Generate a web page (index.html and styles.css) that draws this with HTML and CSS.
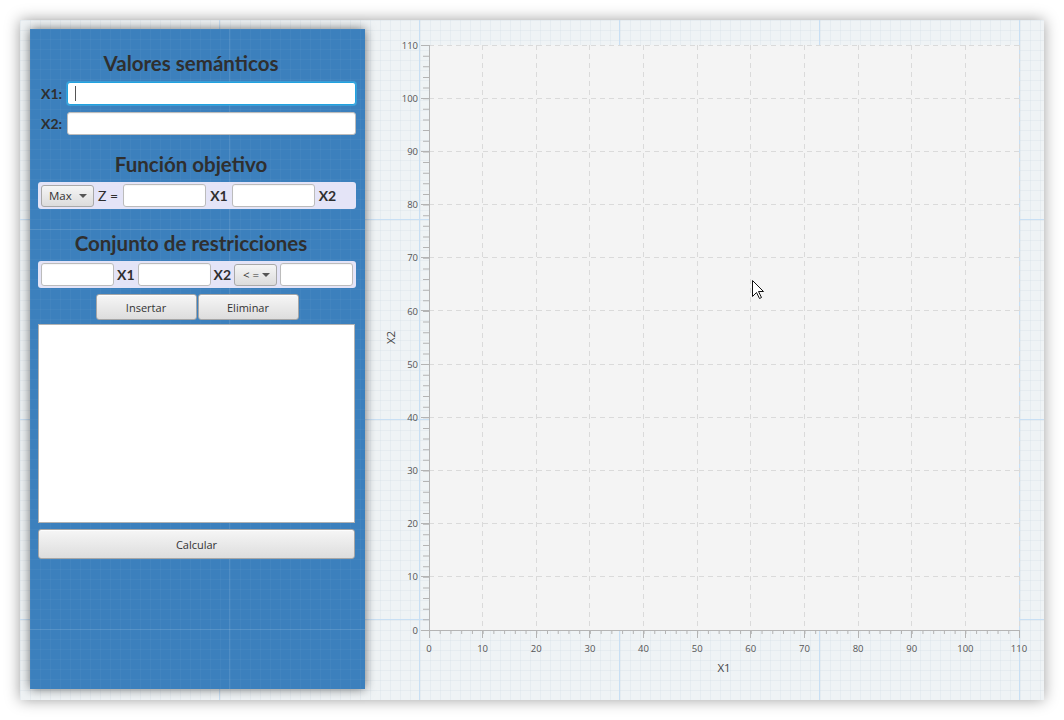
FILE: index.html
```html
<!DOCTYPE html>
<html lang="es">
<head>
<meta charset="utf-8">
<title>Programación lineal</title>
<link rel="stylesheet" href="styles.css">
</head>
<body>
<div class="window">
  <aside class="panel">
    <h2 class="title t1">Valores semánticos</h2>
    <div class="field-row">
      <label class="lbl lbl-row">X1:</label>
      <span class="input-wrap focused"><input class="tf tf-wide" type="text"></span>
    </div>
    <div class="field-row">
      <label class="lbl lbl-row">X2:</label>
      <span class="input-wrap"><input class="tf tf-wide" type="text"></span>
    </div>

    <h2 class="title t2">Función objetivo</h2>
    <div class="box box-obj">
      <div class="combo combo-max"><span class="combo-text">Max</span><i class="arrow"></i></div>
      <span class="txt">Z =</span>
      <input class="tf tf-83" type="text">
      <span class="lbl">X1</span>
      <input class="tf tf-83" type="text">
      <span class="lbl">X2</span>
    </div>

    <h2 class="title t3">Conjunto de restricciones</h2>
    <div class="box box-res">
      <input class="tf tf-73" type="text">
      <span class="lbl">X1</span>
      <input class="tf tf-73" type="text">
      <span class="lbl">X2</span>
      <div class="combo combo-op"><span class="combo-text">&lt; =</span><i class="arrow"></i></div>
      <input class="tf tf-73" type="text">
    </div>

    <div class="btn-row">
      <button class="btn btn-half" type="button">Insertar</button>
      <button class="btn btn-half" type="button">Eliminar</button>
    </div>
    <div class="list"></div>
    <button class="btn btn-full" type="button">Calcular</button>
  </aside>

  <svg class="chart" width="679" height="680" viewBox="365 20 679 680" xmlns="http://www.w3.org/2000/svg">
    <rect x="429" y="45" width="590" height="585" fill="#f4f4f4"/>
    <g class="grid" stroke="#dadada" stroke-width="1" stroke-dasharray="5 4" fill="none">
      <line x1="482.5" y1="45" x2="482.5" y2="630"/>
      <line x1="536.5" y1="45" x2="536.5" y2="630"/>
      <line x1="589.5" y1="45" x2="589.5" y2="630"/>
      <line x1="643.5" y1="45" x2="643.5" y2="630"/>
      <line x1="697.5" y1="45" x2="697.5" y2="630"/>
      <line x1="750.5" y1="45" x2="750.5" y2="630"/>
      <line x1="804.5" y1="45" x2="804.5" y2="630"/>
      <line x1="858.5" y1="45" x2="858.5" y2="630"/>
      <line x1="911.5" y1="45" x2="911.5" y2="630"/>
      <line x1="965.5" y1="45" x2="965.5" y2="630"/>
      <line x1="1019.5" y1="45" x2="1019.5" y2="630"/>
      <line x1="429" y1="576.5" x2="1020" y2="576.5"/>
      <line x1="429" y1="523.5" x2="1020" y2="523.5"/>
      <line x1="429" y1="470.5" x2="1020" y2="470.5"/>
      <line x1="429" y1="417.5" x2="1020" y2="417.5"/>
      <line x1="429" y1="364.5" x2="1020" y2="364.5"/>
      <line x1="429" y1="310.5" x2="1020" y2="310.5"/>
      <line x1="429" y1="257.5" x2="1020" y2="257.5"/>
      <line x1="429" y1="204.5" x2="1020" y2="204.5"/>
      <line x1="429" y1="151.5" x2="1020" y2="151.5"/>
      <line x1="429" y1="98.5" x2="1020" y2="98.5"/>
      <line x1="429" y1="45.5" x2="1020" y2="45.5"/>
    </g>
    <g class="axes" stroke="#b4b4b4" fill="none">
      <line x1="429.5" y1="45" x2="429.5" y2="631"/>
      <line x1="429" y1="630.5" x2="1020" y2="630.5"/>
      <line x1="426" y1="631" x2="426" y2="45" stroke-width="6" stroke-dasharray="1 9.636"/>
      <line x1="429" y1="632" x2="1020" y2="632" stroke-width="4" stroke-dasharray="1 9.727"/>
      <line x1="421" y1="630.5" x2="429" y2="630.5"/>
      <line x1="421" y1="576.5" x2="429" y2="576.5"/>
      <line x1="421" y1="523.5" x2="429" y2="523.5"/>
      <line x1="421" y1="470.5" x2="429" y2="470.5"/>
      <line x1="421" y1="417.5" x2="429" y2="417.5"/>
      <line x1="421" y1="364.5" x2="429" y2="364.5"/>
      <line x1="421" y1="310.5" x2="429" y2="310.5"/>
      <line x1="421" y1="257.5" x2="429" y2="257.5"/>
      <line x1="421" y1="204.5" x2="429" y2="204.5"/>
      <line x1="421" y1="151.5" x2="429" y2="151.5"/>
      <line x1="421" y1="98.5" x2="429" y2="98.5"/>
      <line x1="421" y1="45.5" x2="429" y2="45.5"/>
      <line x1="429.5" y1="630" x2="429.5" y2="638"/>
      <line x1="482.5" y1="630" x2="482.5" y2="638"/>
      <line x1="536.5" y1="630" x2="536.5" y2="638"/>
      <line x1="589.5" y1="630" x2="589.5" y2="638"/>
      <line x1="643.5" y1="630" x2="643.5" y2="638"/>
      <line x1="697.5" y1="630" x2="697.5" y2="638"/>
      <line x1="750.5" y1="630" x2="750.5" y2="638"/>
      <line x1="804.5" y1="630" x2="804.5" y2="638"/>
      <line x1="858.5" y1="630" x2="858.5" y2="638"/>
      <line x1="911.5" y1="630" x2="911.5" y2="638"/>
      <line x1="965.5" y1="630" x2="965.5" y2="638"/>
      <line x1="1019.5" y1="630" x2="1019.5" y2="638"/>
    </g>
    <g class="ylabels" text-anchor="end">
      <text x="418" y="633.5">0</text>
      <text x="418" y="580.3">10</text>
      <text x="418" y="527">20</text>
      <text x="418" y="474">30</text>
      <text x="418" y="421">40</text>
      <text x="418" y="367.5">50</text>
      <text x="418" y="314.5">60</text>
      <text x="418" y="261">70</text>
      <text x="418" y="208">80</text>
      <text x="418" y="155">90</text>
      <text x="418" y="101.5">100</text>
      <text x="418" y="48.5">110</text>
    </g>
    <g class="xlabels" text-anchor="middle">
      <text x="429" y="652">0</text>
      <text x="482.6" y="652">10</text>
      <text x="536.3" y="652">20</text>
      <text x="589.9" y="652">30</text>
      <text x="643.5" y="652">40</text>
      <text x="697.2" y="652">50</text>
      <text x="750.8" y="652">60</text>
      <text x="804.5" y="652">70</text>
      <text x="858.1" y="652">80</text>
      <text x="911.7" y="652">90</text>
      <text x="965.4" y="652">100</text>
      <text x="1019" y="652">110</text>
    </g>
    <text class="axis-title" x="724" y="672" text-anchor="middle">X1</text>
    <text class="axis-title" x="395" y="337.5" text-anchor="middle" transform="rotate(-90 395 337.5)">X2</text>
    <path class="cursor" d="M752.5 280.5 L752.5 296.5 L756.5 292.5 L759.5 298.5 L761.5 297.5 L758.5 291.5 L763.5 291.5 Z" fill="#fff" stroke="#111" stroke-width="1"/>
  </svg>
</div>
</body>
</html>
```
FILE: styles.css
```css
* { box-sizing: border-box; }

html, body {
  margin: 0;
  padding: 0;
  background: #ffffff;
}

body {
  font-family: "Open Sans", "Liberation Sans", sans-serif;
  color: #333;
}

.window {
  margin: 20px;
  width: 1024px;
  height: 680px;
  display: flex;
  align-items: flex-start;
  background-color: #eff3f5;
  background-image:
    linear-gradient(to right, transparent 199px, #c8dff4 199px, #c8dff4 200px, transparent 200px),
    linear-gradient(to bottom, transparent 199px, #c8dff4 199px, #c8dff4 200px, transparent 200px),
    linear-gradient(to right, rgba(195, 210, 220, 0.2) 1px, transparent 1px),
    linear-gradient(to bottom, rgba(195, 210, 220, 0.2) 1px, transparent 1px);
  background-size: 200px 200px, 200px 200px, 10px 10px, 10px 10px;
  box-shadow: 0 0 14px rgba(0, 0, 0, 0.38);
}

/* ---------- left panel ---------- */
.panel {
  margin: 9px 0 0 10px;
  width: 335px;
  height: 660px;
  padding: 0 9px 0 8px;
  display: flex;
  flex-direction: column;
  background-color: #3c80bd;
  background-image:
    linear-gradient(to right, transparent 199px, rgba(255, 255, 255, 0.1) 199px, rgba(255, 255, 255, 0.1) 200px, transparent 200px),
    linear-gradient(to bottom, transparent 200px, rgba(255, 255, 255, 0.1) 200px, rgba(255, 255, 255, 0.1) 201px, transparent 201px),
    linear-gradient(to right, rgba(255, 255, 255, 0.03) 1px, transparent 1px),
    linear-gradient(to bottom, rgba(255, 255, 255, 0.03) 1px, transparent 1px);
  background-size: 200px 400px, 200px 400px, 10px 10px, 10px 10px;
  box-shadow: 0 0 10px rgba(0, 0, 0, 0.55);
}

.title {
  margin: 0;
  padding-right: 12px;
  height: 24px;
  line-height: 24px;
  text-align: center;
  font-family: Lato, "Open Sans", sans-serif;
  font-weight: 700;
  font-size: 20.5px;
  color: #2f2f2f;
}
.t1 { margin-top: 22px; }
.t2 { margin-top: 17px; }
.t3 { margin-top: 22px; }

.field-row {
  margin-top: 7px;
  height: 23px;
  display: flex;
  align-items: center;
  padding-left: 3px;
}

.lbl {
  font-family: Lato, "Open Sans", sans-serif;
  font-weight: 700;
  font-size: 14px;
  color: #2f2f2f;
  line-height: 16px;
}
.lbl-row {
  width: 26px;
  flex: none;
}

.txt {
  font-family: Lato, "Open Sans", sans-serif;
  font-size: 14px;
  color: #2f2f2f;
  line-height: 16px;
  padding: 0 2px 0 1px;
}

.input-wrap {
  position: relative;
  display: block;
}
.input-wrap.focused::after {
  content: "";
  position: absolute;
  left: 8px;
  top: 4px;
  width: 1px;
  height: 15px;
  background: #555;
}

.tf {
  display: block;
  height: 23px;
  margin: 0;
  padding: 0 6px;
  border: 1px solid #bcbcbc;
  border-radius: 3px;
  background: #fff;
  font: 12px "Open Sans", sans-serif;
  outline: none;
  box-shadow: inset 0 1px 1px rgba(0, 0, 0, 0.04);
}
.tf-wide { width: 289px; }
.focused .tf {
  border-color: #22a2df;
  box-shadow: 0 0 0 1px rgba(60, 180, 235, 0.55);
}
.tf-83 { width: 83px; }
.tf-73 { width: 73px; }

.box {
  margin-top: 6px;
  height: 27px;
  display: flex;
  align-items: center;
  gap: 3px;
  padding: 0 3px;
  background: #e4e4f7;
  border-radius: 3px;
}
.box-obj .lbl { padding: 0 1px; }

.combo {
  height: 22px;
  display: flex;
  align-items: center;
  justify-content: space-between;
  border: 1px solid #a9a9a9;
  border-radius: 3px;
  background: linear-gradient(#f5f5f5, #dcdcdc);
  font-size: 11.5px;
  color: #333;
}
.combo-max {
  width: 53px;
  padding: 0 6px 0 7px;
}
.combo-op {
  width: 44px;
  padding: 0 6px 0 8px;
}
.combo-text { line-height: 16px; white-space: pre; }
.arrow {
  width: 0;
  height: 0;
  border-left: 4px solid transparent;
  border-right: 4px solid transparent;
  border-top: 4px solid #555;
}

.btn {
  margin: 0;
  padding: 0;
  border: 1px solid #a6a6a6;
  border-radius: 3px;
  background: linear-gradient(#f6f6f6, #dddddd);
  font: 11px "Open Sans", sans-serif;
  color: #333;
  box-shadow: inset 0 1px 0 rgba(255, 255, 255, 0.8);
}

.btn-row {
  margin-top: 6px;
  display: flex;
  justify-content: center;
  gap: 1px;
}
.btn-half {
  width: 101px;
  height: 26px;
}

.list {
  margin-top: 4px;
  width: 317px;
  height: 199px;
  background: #fff;
  border: 1px solid #b2b2b2;
}

.btn-full {
  margin-top: 6px;
  width: 317px;
  height: 30px;
  font-size: 11px;
}

/* ---------- chart ---------- */
.chart {
  display: block;
  flex: none;
}
.ylabels text,
.xlabels text {
  font-family: "Open Sans", sans-serif;
  font-size: 9.5px;
  fill: #555;
}
.axis-title {
  font-family: "Open Sans", sans-serif;
  font-size: 11.5px;
  fill: #444;
}
```
